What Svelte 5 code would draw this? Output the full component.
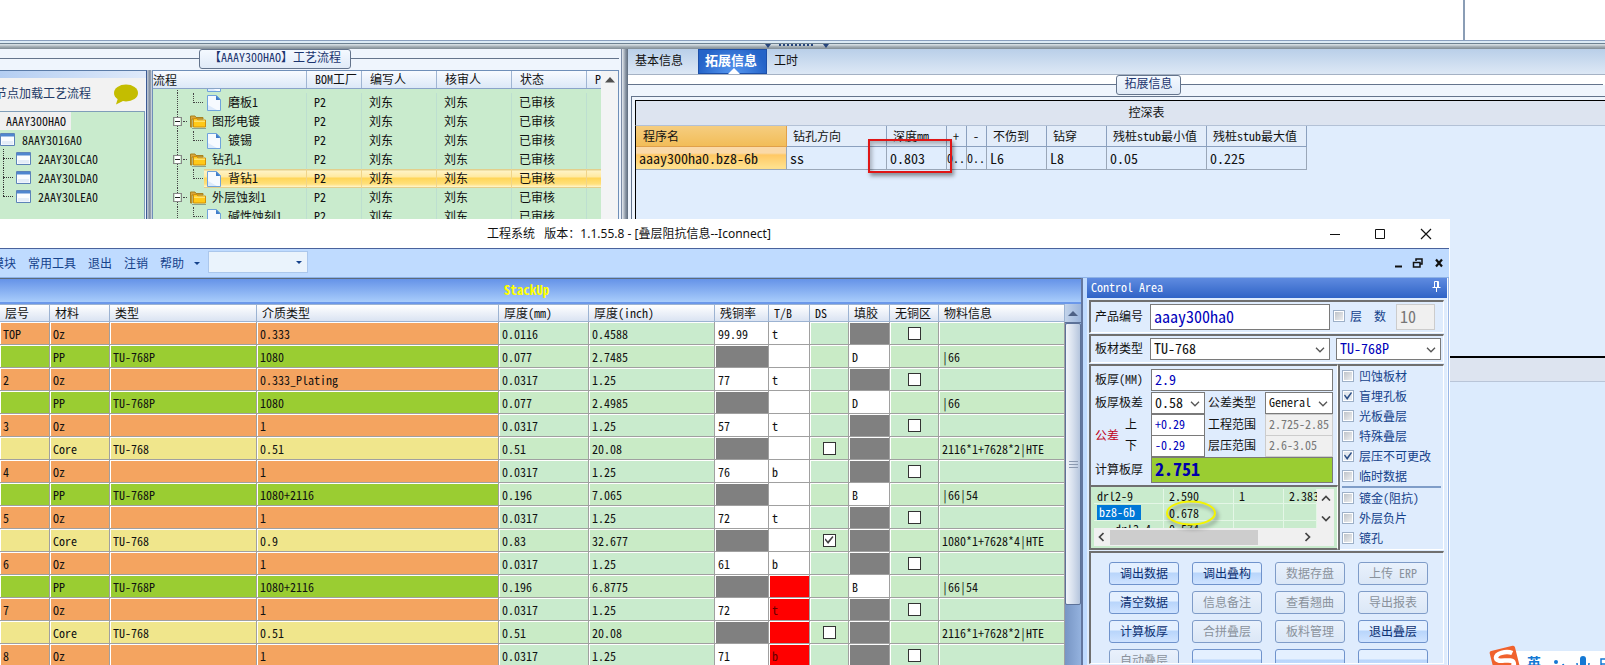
<script>
  const bomTree = ['2AAY30LCA0', '2AAY30LDA0', '2AAY30LEA0'];

  const steps = [
    { kind: 'file', name: '' },
    { kind: 'file', name: '磨板1', last: true },
    { kind: 'folder', name: '图形电镀' },
    { kind: 'file', name: '镀锡', last: true },
    { kind: 'folder', name: '钻孔1' },
    { kind: 'file', name: '背钻1', last: true, active: true },
    { kind: 'folder', name: '外层蚀刻1' },
    { kind: 'file', name: '碱性蚀刻1' }
  ];

  const depthHead = ['程序名', '钻孔方向', '深度mm', '+', '-', '不伤到', '钻穿', '残桩stub最小值', '残桩stub最大值'];
  const depthRow = ['aaay300ha0.bz8-6b', 'ss', '0.803', '0..', '0..', 'L6', 'L8', '0.05', '0.225'];
  const depthCols = [151, 100, 60, 20, 20, 60, 60, 100, 100];

  const stackHead = ['层号', '材料', '类型', '介质类型', '厚度(mm)', '厚度(inch)', '残铜率', 'T/B', 'DS', '填胶', '无铜区', '物料信息'];
  const stackCols = [50, 60, 147, 0, 90, 126, 54, 41, 39, 41, 49, 126];

  const oz = (no, diel, mm, inch, cu, tb, red) => ({ k: 'oz', no, mat: 'Oz', type: '', diel, mm, inch, cu, tb, red });
  const pp = (diel, mm, inch, glue, info, red) => ({ k: 'pp', no: '', mat: 'PP', type: 'TU-768P', diel, mm, inch, glue, info, red });
  const core = (diel, mm, inch, ds, info, red) => ({ k: 'core', no: '', mat: 'Core', type: 'TU-768', diel, mm, inch, ds, info, red });

  const layers = [
    oz('TOP', '0.333', '0.0116', '0.4588', '99.99', 't'),
    pp('1080', '0.077', '2.7485', 'D', '|66'),
    oz('2', '0.333_Plating', '0.0317', '1.25', '77', 't'),
    pp('1080', '0.077', '2.4985', 'D', '|66'),
    oz('3', '1', '0.0317', '1.25', '57', 't'),
    core('0.51', '0.51', '20.08', false, '2116*1+7628*2|HTE'),
    oz('4', '1', '0.0317', '1.25', '76', 'b'),
    pp('1080+2116', '0.196', '7.065', 'B', '|66|54'),
    oz('5', '1', '0.0317', '1.25', '72', 't'),
    core('0.9', '0.83', '32.677', true, '1080*1+7628*4|HTE'),
    oz('6', '1', '0.0317', '1.25', '61', 'b'),
    pp('1080+2116', '0.196', '6.8775', 'B', '|66|54', true),
    oz('7', '1', '0.0317', '1.25', '72', 't', true),
    core('0.51', '0.51', '20.08', false, '2116*1+7628*2|HTE', true),
    oz('8', '1', '0.0317', '1.25', '71', 'b', true)
  ];

  const flags = [
    ['凹蚀板材', false], ['盲埋孔板', true], ['光板叠层', false],
    ['特殊叠层', false], ['层压不可更改', true], ['临时数据', false]
  ];
  const flags2 = [['镀金(阻抗)', false], ['外层负片', false], ['镀孔', false]];

  const actions = [
    ['调出数据', true], ['调出叠构', true], ['数据存盘', false], ['上传 ERP', false],
    ['清空数据', true], ['信息备注', false], ['查看翘曲', false], ['导出报表', false],
    ['计算板厚', true], ['合拼叠层', false], ['板料管理', false], ['退出叠层', true],
    ['自动叠层', false], ['', true], ['', true], ['', true]
  ];
</script>

{#snippet fileIcon()}
  <svg class="ico" width="14" height="16" viewBox="0 0 14 16" aria-hidden="true">
    <path d="M.5 .5H9.5L13.5 4.5V15.5H.5Z" fill="#f6faff" stroke="#6fa3dc" />
    <path d="M1 10L10 15H1Z" fill="#dceafb" />
    <path d="M9 .5L13.5 5H9Z" fill="#3d7cc9" />
  </svg>
{/snippet}

{#snippet folderIcon()}
  <svg class="ico" width="16" height="14" viewBox="0 0 16 14" aria-hidden="true">
    <path d="M.5 1H5L6 2.500H13V4H2V12H.5Z" fill="#d9a63c" stroke="#a8821f" />
    <path d="M3.500 12V3.500H7L8 5H15.500V12Z" fill="#ffc918" stroke="#d28f0a" />
    <path d="M4 5.500H15V7H4Z" fill="#ffe36b" />
    <path d="M2 13.500H16" stroke="#8ba38e" />
  </svg>
{/snippet}

{#snippet formIcon()}
  <svg class="ico" width="15" height="13" viewBox="0 0 15 13" aria-hidden="true">
    <path d="M.5 .5H14.500V12.500H.5Z" fill="#fafcff" stroke="#5d83b8" />
    <path d="M1 1H14V3.500H1Z" fill="#4f86cf" />
    <path d="M2 8H13V11.500H2Z" fill="#e4edf8" />
  </svg>
{/snippet}

{#snippet chevron()}
  <svg class="chev" width="10" height="6" viewBox="0 0 10 6" aria-hidden="true">
    <path d="M1 .8L5 4.800L9 .8" fill="none" stroke="#555" stroke-width="1.300" />
  </svg>
{/snippet}

{#snippet flag(item)}
  <label class="flag"><input type="checkbox" checked={item[1]} />{item[0]}</label>
{/snippet}

<div class="desktop">
  <div class="blank"><span class="divider"></span></div>
  <div class="splitbar">
    <svg width="64" height="5" viewBox="0 0 64 5" aria-hidden="true">
      <path d="M0 0H6L3 4ZM58 0H64L61 4Z" fill="#26457c" />
      <path d="M14 1H49" stroke="#26457c" stroke-width="2" stroke-dasharray="2 2" />
    </svg>
  </div>

  <div class="back">
    <section class="left">
      <div class="legend"><h2>【AAAY300HAO】工艺流程</h2></div>
      <div class="left-cols">
        <aside class="bom">
          <div class="bom-strip"></div>
          <div class="bom-head">
            <span>节点加载工艺流程</span>
            <svg width="26" height="22" viewBox="0 0 26 22" aria-hidden="true">
              <ellipse cx="13" cy="9" rx="12" ry="8.500" fill="#c4bd00" />
              <path d="M5 14L3 20.500L12 16Z" fill="#c4bd00" />
            </svg>
          </div>
          <div class="bom-body">
            <div class="bom-root"><span>AAAY300HAO</span></div>
            <div class="bom-row">{@render formIcon()}<span>8AAY3016A0</span></div>
            {#each bomTree as item}
              <div class="bom-row child">{@render formIcon()}<span>{item}</span></div>
            {/each}
          </div>
        </aside>
        <div class="vsplit thin"></div>
        <div class="flow">
          <div class="flow-row head">
            <span class="c0">流程</span><span>BOM工厂</span><span>编写人</span><span>核审人</span><span>状态</span><span>P</span>
          </div>
          <div class="flow-body">
            {#each steps as s}
              <div class="flow-row" class:active={s.active}>
                <span class="c0 {s.kind}" class:last={s.last}>
                  {#if s.kind === 'folder'}<i class="box"></i>{@render folderIcon()}{:else}<i class="elbow"></i>{@render fileIcon()}{/if}
                  <b>{s.name}</b>
                </span>
                {#if s.name}
                  <span>P2</span><span>刘东</span><span>刘东</span><span>已审核</span><span></span>
                {/if}
              </div>
            {/each}
          </div>
          <div class="flow-scroll">
            <svg width="10" height="6" viewBox="0 0 10 6" aria-hidden="true"><path d="M0 5.500L5 0L10 5.500Z" fill="#505050" /></svg>
          </div>
        </div>
      </div>
    </section>

    <div class="vsplit"></div>

    <section class="right">
      <nav class="tabs">
        <button>基本信息</button><button class="on">拓展信息</button><button>工时</button>
      </nav>
      <div class="legend low"><h2>拓展信息</h2></div>
      <div class="depth">
        <div class="depth-title">控深表</div>
        <div class="depth-body">
          <table>
            <colgroup>{#each depthCols as w}<col style="width:{w}px" />{/each}</colgroup>
            <thead><tr>{#each depthHead as h}<th>{h}</th>{/each}</tr></thead>
            <tbody><tr>{#each depthRow as c}<td class:tight={c === '0..'}>{c}</td>{/each}</tr></tbody>
          </table>
          <div class="next-band"></div>
        </div>
      </div>
    </section>
  </div>

  <div class="mark-box"></div>

  <div class="window">
    <header class="titlebar">
      <h1>工程系统&nbsp;&nbsp; 版本：1.1.55.8 - [叠层阻抗信息--Iconnect]</h1>
      <svg width="103" height="12" viewBox="0 0 103 12" aria-hidden="true">
        <path d="M1 6.500H11" stroke="#111" />
        <path d="M46.500 1.500H55.500V10.500H46.500Z" fill="none" stroke="#111" />
        <path d="M92 1L102 11M102 1L92 11" stroke="#111" stroke-width="1.200" />
      </svg>
    </header>
    <nav class="menubar">
      <button>模块</button><button>常用工具</button><button>退出</button><button>注销</button><button>帮助</button>
      <i class="tri"></i>
      <div class="combo"><i class="tri"></i></div>
      <svg width="50" height="10" viewBox="0 0 50 10" aria-hidden="true">
        <path d="M1 8.500H8" stroke="#111" stroke-width="2" />
        <path d="M22 3V1H28V6H26" fill="none" stroke="#111" stroke-width="1.500" />
        <path d="M19.500 4.500H26V9H19.500Z" fill="none" stroke="#111" stroke-width="1.500" />
        <path d="M42 1.500L48 8.500M48 1.500L42 8.500" stroke="#111" stroke-width="2.200" />
      </svg>
    </nav>

    <div class="work">
      <section class="stack">
        <h2>StackUp</h2>
        <div class="stack-cols">
          <table>
            <colgroup>{#each stackCols as w}<col style={w ? `width:${w}px` : ''} />{/each}</colgroup>
            <thead><tr>{#each stackHead as h}<th>{h}</th>{/each}</tr></thead>
            <tbody>
              {#each layers as l}
                <tr class={l.k}>
                  <td class="m">{l.no}</td><td class="m">{l.mat}</td><td class="m">{l.type}</td><td class="m">{l.diel}</td>
                  <td>{l.mm}</td><td>{l.inch}</td>
                  <td class={l.cu ? 'w' : 'g'}>{l.cu ?? ''}</td>
                  <td class={l.red ? 'r' : 'w'}>{l.tb ?? ''}</td>
                  <td class="ck">{#if l.k === 'core'}<input type="checkbox" aria-label="DS" checked={l.ds} />{/if}</td>
                  <td class={l.glue ? 'w' : 'g'}>{l.glue ?? ''}</td>
                  <td class="ck">{#if l.k === 'oz'}<input type="checkbox" aria-label="无铜区" />{/if}</td>
                  <td>{l.info ?? ''}</td>
                </tr>
              {/each}
            </tbody>
          </table>
          <div class="vscroll">
            <div class="up"><svg width="10" height="5" viewBox="0 0 10 5" aria-hidden="true"><path d="M0 5L5 0L10 5Z" fill="#4d6185" /></svg></div>
            <div class="thumb"><i></i></div>
          </div>
        </div>
      </section>

      <section class="control">
        <h2>
          <span>Control Area</span>
          <svg width="9" height="11" viewBox="0 0 9 11" aria-hidden="true">
            <path d="M2.500 6V.5H6.500V6M.5 6.500H8.500M4.500 7V11M5.500 1V6" fill="none" stroke="#fff" />
          </svg>
        </h2>

        <div class="panel p1">
          <label for="prod">产品编号</label>
          <input id="prod" class="f16 blue" value="aaay300ha0" />
          <label class="flag"><input type="checkbox" />层&nbsp;&nbsp;数</label>
          <input class="f16 off" aria-label="层数" value="10" disabled />
        </div>

        <div class="panel p2">
          <label for="mat">板材类型</label>
          <div class="sel"><select id="mat" class="f14"><option>TU-768</option></select>{@render chevron()}</div>
          <div class="sel"><select class="f14 blue" aria-label="PP类型"><option>TU-768P</option></select>{@render chevron()}</div>
        </div>

        <div class="mid">
          <div class="mid-left">
            <div class="fields">
              <label for="thk">板厚(MM)</label>
              <input id="thk" class="f14 blue wide" value="2.9" />
              <label for="rng">板厚极差</label>
              <div class="sel"><select id="rng" class="f14"><option>0.58</option></select>{@render chevron()}</div>
              <label for="tol">公差类型</label>
              <div class="sel"><select id="tol"><option>General</option></select>{@render chevron()}</div>
              <div class="tolerance"><strong>公差</strong><span><label for="up">上</label><label for="dn">下</label></span></div>
              <input id="up" class="blue" value="+0.29" />
              <label for="eng">工程范围</label>
              <input id="eng" class="off" value="2.725-2.85" disabled />
              <input id="dn" class="blue" value="-0.29" />
              <label for="lam">层压范围</label>
              <input id="lam" class="off" value="2.6-3.05" disabled />
              <label for="calc">计算板厚</label>
              <input id="calc" class="wide calc" value="2.751" />
            </div>
            <div class="drills">
              <div class="drill-view">
                <table>
                  <tbody>
                    <tr><td>drl2-9</td><td>2.590</td><td>1</td><td>2.383</td></tr>
                    <tr><td><mark>bz8-6b</mark></td><td>0.678</td><td></td><td></td></tr>
                    <tr><td>&nbsp; &nbsp;drl3-4</td><td>0.574</td><td></td><td></td></tr>
                  </tbody>
                </table>
              </div>
              <div class="dv">
                <svg width="10" height="6" viewBox="0 0 10 6" aria-hidden="true"><path d="M1 5.500L5 1.500L9 5.500" fill="none" stroke="#444" stroke-width="1.700" /></svg>
                <svg width="10" height="6" viewBox="0 0 10 6" aria-hidden="true"><path d="M1 .5L5 4.500L9 .5" fill="none" stroke="#444" stroke-width="1.700" /></svg>
              </div>
              <div class="dh">
                <svg width="6" height="10" viewBox="0 0 6 10" aria-hidden="true"><path d="M5.500 1L1.500 5L5.500 9" fill="none" stroke="#444" stroke-width="1.700" /></svg>
                <i></i>
                <svg width="6" height="10" viewBox="0 0 6 10" aria-hidden="true"><path d="M.5 1L4.500 5L.5 9" fill="none" stroke="#444" stroke-width="1.700" /></svg>
              </div>
              <svg class="ring" width="56" height="32" viewBox="0 0 56 32" aria-hidden="true">
                <ellipse cx="27" cy="14" rx="24" ry="11.500" fill="none" stroke="#f4f400" stroke-width="2" />
              </svg>
            </div>
          </div>
          <div class="flags">
            {#each flags as f}{@render flag(f)}{/each}
            <hr />
            {#each flags2 as f}{@render flag(f)}{/each}
          </div>
        </div>

        <div class="panel actions">
          {#each actions as a}<button disabled={!a[1]} aria-label={a[0] || '备用'}>{a[0]}</button>{/each}
        </div>
      </section>
    </div>
  </div>

  <div class="ime">
    <svg class="logo" width="32" height="32" viewBox="0 0 32 32" aria-hidden="true">
      <g transform="rotate(-14 16 16)">
        <rect x="3" y="3" width="26" height="26" rx="2" fill="#f0622d" />
        <path d="M25 10C20 6 8 6 8 11.500C8 17 24 14 24 20C24 26 11 25 7 21" fill="none" stroke="#fff" stroke-width="4.500" />
      </g>
    </svg>
    <span>英</span>
    <svg width="66" height="18" viewBox="0 0 66 18" aria-hidden="true">
      <circle cx="3" cy="7" r="2" fill="#1478d4" /><path d="M10 9C11 12 9 14 7 15" stroke="#1478d4" stroke-width="2" fill="none" />
      <rect x="27" y="1" width="6" height="11" rx="3" fill="#1478d4" /><path d="M24 8C24 16 36 16 36 8M30 14V18" stroke="#1478d4" stroke-width="1.500" fill="none" />
      <path d="M48 4H66V16H48ZM54 4V16M60 4V16M48 9H66" stroke="#1478d4" stroke-width="1.500" fill="none" />
    </svg>
  </div>
</div>

<style>
  :global(body) { background: #dfeafb; overflow: hidden; }

  .desktop {
    position: relative;
    display: flex;
    flex-direction: column;
    height: 100vh;
    overflow: hidden;
    background: #fff;
    color: #111;
    font: 12px/16px "Noto Sans CJK SC", sans-serif;
    font-feature-settings: "hwid";
  }
  .desktop *, .desktop *::before, .desktop *::after { box-sizing: border-box; }
  h1, h2 { margin: 0; font-size: 12px; font-weight: 400; }
  button, input, select {
    margin: 0;
    padding: 0;
    border: 0;
    background: none;
    color: inherit;
    font: inherit;
    font-feature-settings: inherit;
    min-width: 0;
  }
  table { border-collapse: separate; border-spacing: 0; table-layout: fixed; }
  th, td { padding: 0; font-weight: 400; text-align: left; white-space: nowrap; overflow: hidden; }
  .ico { flex: none; }

  .blank { height: 40px; display: flex; justify-content: flex-end; flex: none; }
  .divider { width: 2px; margin-right: 140px; background: #8a9db5; }
  .splitbar {
    flex: none;
    height: 9px;
    padding: 4px 0 0 765px;
    background: linear-gradient(#8aa0bf 0 1px, #dcebf6 1px 3px, #6d8191 3px 4px, #d2dbe0 4px 5px, #aeb8be 6px, #7f8b94 9px);
  }
  .splitbar svg { display: block; }

  .back { flex: 1; display: flex; min-height: 0; background: #eff5fd; }
  .left { width: 622px; flex: none; display: flex; flex-direction: column; border-right: 1px solid #7b8ba6; }
  .legend { position: relative; height: 21px; display: flex; flex: none; }
  .left .legend { padding-left: 199px; }
  .legend::before { content: ""; position: absolute; inset: 9px 2px auto 0; border-top: 1px solid #64748c; }
  .legend h2 {
    position: relative;
    height: 20px;
    padding: 0 7px;
    border: 1px solid #64748c;
    border-radius: 3px;
    background: linear-gradient(#f4f9ff, #e0eaf7);
    color: #1c356f;
    line-height: 13px;
  }
  .left .legend h2 { padding: 0 9px; }
  .left-cols { flex: 1; display: flex; min-height: 0; }
  .bom { width: 147px; flex: none; display: flex; flex-direction: column; border-top: 1px solid #5b7ca8; border-right: 1px solid #3c5a93; }
  .bom-strip { height: 7px; background: linear-gradient(90deg, #b4cef2, #dfeafa); flex: none; }
  .bom-head { height: 33px; flex: none; display: flex; align-items: center; gap: 22px; margin-right: 1px; background: #f2f2f2; white-space: nowrap; color: #233a66; }
  .bom-head span { margin-left: -5px; padding-bottom: 4px; }
  .bom-head svg { flex: none; }
  .bom-body { flex: 1; margin-right: 1px; border: 1px solid #7f9db9; border-left: 0; background: #c9ebcd; }
  .bom-root { height: 18px; }
  .bom-root span { display: inline-block; height: 18px; padding: 0 5px 0 6px; background: #f0f0f0; line-height: 17px; }
  .bom-row { height: 19px; display: flex; align-items: center; gap: 7px; }
  .bom-row.child { position: relative; padding-left: 16px; }
  .child::before { content: ""; position: absolute; left: 3px; top: 0; height: 100%; width: 10px; border-left: 1px dotted #333; }
  .child:last-child::before { height: 9px; }
  .child::after { content: ""; position: absolute; left: 3px; top: 9px; width: 10px; border-top: 1px dotted #333; }

  .vsplit { width: 6px; flex: none; background: linear-gradient(90deg, #e6ebf1, #8894a3 60%, #5d6b7d); }
  .vsplit.thin { width: 5px; background: linear-gradient(90deg, #c3cdda, #7b8899 60%, #dfe6ef); }

  .flow { position: relative; flex: 1; display: flex; flex-direction: column; min-width: 0; margin-right: 2px; border: 1px solid #6f8fb8; border-width: 1px 1px 0; }
  .flow-row { display: grid; grid-template-columns: 154px 55px 75px 75px 75px 1fr; height: 19px; flex: none; line-height: 17px; }
  .flow-row > span { padding-left: 7px; border-right: 1px solid #bddfd0; white-space: nowrap; overflow: hidden; }
  .flow-row > span:last-child { border-right: 0; }
  .flow-row > .c0 { padding-left: 0; position: relative; display: flex; align-items: center; }
  .flow-row.head { height: 18px; background: linear-gradient(#f8fbff, #dce8f7); border-bottom: 1px solid #8aa4c8; line-height: 15px; }
  .flow-row.head > span { padding-left: 8px; border-color: #9fb5d3; }
  .flow-row.head > .c0 { padding-left: 0; }
  .flow-body { flex: 1; min-height: 0; overflow: hidden; margin-right: 16px; background: #c9ebcd; }
  .flow-body .flow-row:first-child { margin-top: -15px; }
  .c0 b { font-weight: 400; padding-bottom: 2px; }
  .c0.folder { gap: 6px; }
  .c0.file { gap: 7px; }
  .flow-row > .c0.folder { padding-left: 20px; }
  .flow-row > .c0.file { padding-left: 54px; }
  .c0.folder::before, .c0.file::before { content: ""; position: absolute; left: 24px; top: 0; bottom: 0; border-left: 1px dotted #444; }
  .elbow { position: absolute; left: 40px; top: 0; width: 10px; height: 10px; border-left: 1px dotted #444; border-bottom: 1px dotted #444; }
  .box { position: relative; width: 9px; height: 9px; margin-right: 2px; border: 1px solid #888; background: linear-gradient(#fff 0 3px, #222 3px 4px, #fff 4px) content-box #fff; padding: 0 1px; }
  .box::after { content: ""; position: absolute; left: 9px; top: 3px; width: 4px; border-top: 1px dotted #444; }
  .active { background: linear-gradient(90deg, #c9ebcd 51px, transparent 51px), linear-gradient(#e3cf8c 0 1px, #fff3c4 2px, #ffe9a0 8px, #ffd557 9px, #ffe07c 15px, #fff6d0 18px, #e3cf8c 18px); }
  .active > span { border-color: #f0d48a; }
  .flow-scroll { position: absolute; right: 0; top: 0; bottom: 0; width: 17px; padding: 6px 0 0 4px; background: #f3f4f5; }
  .flow-scroll svg { display: block; }

  .right { flex: 1; min-width: 0; display: flex; flex-direction: column; background: #eff5fd; }
  .tabs { height: 26px; flex: none; display: flex; background: linear-gradient(#b9cfe9, #dde8f5); border-bottom: 1px solid #a5b2c4; }
  .tabs button { padding: 0 8px 3px 7px; }
  .tabs button:first-child { padding-right: 15px; }
  .tabs button.on { position: relative; padding: 0 9px 3px 6px; border: 1px solid #1c4fa8; background: radial-gradient(circle at 50% 120%, #5b9cf4, #2463c8 80%); color: #fff; font-size: 13px; font-weight: 700; }
  .tabs button.on::after { content: ""; position: absolute; left: 29px; bottom: -1px; border: 6px solid transparent; border-top: 0; border-bottom-color: #fff; }
  .right .legend { padding-left: 64px; background: linear-gradient(#fff 10px, #eff5fd 10px); justify-content: center; }
  .depth { flex: 1; display: flex; flex-direction: column; min-height: 0; margin-left: 3px; padding: 3px 0 0 3px; border: 1px solid #64748c; border-width: 1px 0 0 1px; }
  .depth-title { height: 25px; flex: none; border: 1px solid #000; border-width: 1px 0 0 1px; background: #dde4f0; text-align: center; line-height: 22px; padding-left: 52px; }
  .depth-body { flex: 1; display: flex; flex-direction: column; align-items: flex-start; min-height: 0; border-left: 1px solid #000; background: #e0edfd; border-top: 1px solid #b3c1d6; }
  .depth table { width: 671px; flex: none; }
  .depth th { height: 21px; padding-left: 6px; border: 1px solid #8ba0be; border-width: 0 1px 1px 0; background: #e3edfa; line-height: 18px; }
  .depth td { height: 23px; padding-left: 3px; border-right: 1px solid #9aa7b8; border-bottom: 1px solid #9aa7b8; font-size: 14px; line-height: 22px; }
  .depth td.tight { padding: 0; overflow: visible; font-size: 12px; }
  .depth th:first-child { padding-left: 7px; background: linear-gradient(#f5cd80, #f2bd58); border-color: #e0a04a; }
  .depth td:first-child { background: linear-gradient(#fad9a8 0 6px, #ffc864 8px, #ffe08c 20px); }
  .next-band { flex: 1; width: 100%; background: linear-gradient(#e0edfd 0 186px, #000 186px 188px, #dde4f0 188px 211px, #b9c5d8 211px 212px, #dcebfd 212px); }

  .mark-box { position: absolute; left: 868px; top: 139px; width: 84px; height: 34px; border: 2px solid #e01616; box-shadow: 2px 3px 4px #0006, inset 2px 3px 4px #0004; }

  .window { position: absolute; left: 0; right: 155px; top: 219px; bottom: 0; display: flex; flex-direction: column; background: #bfdbff; border-right: 1px solid #fff; overflow: hidden; }
  .titlebar { height: 30px; flex: none; display: flex; align-items: center; justify-content: space-between; padding: 0 17px 0 487px; background: #fff; border-bottom: 1px solid #4a629c; }
  .titlebar h1 { font-feature-settings: normal; font-family: "Noto Sans", "Noto Sans CJK SC", sans-serif; white-space: nowrap; }
  .menubar { height: 29px; flex: none; display: flex; align-items: center; gap: 12px; padding: 0 5px 0 0; border-bottom: 1px solid #8eb2e6; color: #15428b; }
  .menubar button:first-child { margin-left: -8px; }
  .tri { width: 0; border: 3px solid transparent; border-top-color: #15428b; border-bottom: 0; margin: 0 -4px 0 -2px; }
  .combo { width: 100px; height: 22px; display: flex; align-items: center; justify-content: flex-end; margin: -2px auto 0 0; padding-right: 9px; border: 1px solid #abc7ec; background: #eaf3fc; }

  .work { flex: 1; min-height: 0; display: flex; gap: 4px; padding-right: 1px; }
  .stack { flex: 1; min-width: 0; display: flex; flex-direction: column; border-right: 2px solid #63779f; }
  .stack h2 { height: 26px; flex: none; border-top: 1px solid #5c6b7c; border-bottom: 2px solid #6b98ea; background: linear-gradient(#6593e8, #a8ccfb); color: #ff0; font-size: 13px; font-weight: 700; line-height: 22px; text-align: center; padding-right: 28px; }
  .stack-cols { flex: 1; min-height: 0; display: flex; }
  .stack table { flex: 1; min-width: 0; width: 0; height: max-content; background: #c9ebcd; }
  .stack th { height: 18px; padding-left: 5px; border: 1px solid #9cb3d2; border-left: 0; background: linear-gradient(#fff, #dae3f2); line-height: 16px; }
  .stack td { height: 23px; padding-left: 3px; border-right: 1px solid #a0a0a0; border-bottom: 1px solid #a0a0a0; box-shadow: inset 1px 1px #fff; line-height: 21px; white-space: pre; }
  .oz .m { background: #f4a460; }
  .pp .m { background: #9acd32; }
  .core .m { background: #f0e68c; }
  .pp td, .core td { background: #c9ebc6; }
  .stack td.w { background: #fff; }
  .stack td.g { background: #808080; }
  .stack td.r { background: #f00; color: #600; }
  .stack td.ck { padding: 0; text-align: center; }
  .ck input { appearance: none; display: block; width: 13px; height: 13px; margin: 0 auto; border: 1px solid #333; background: #fff; }
  .ck input:checked::before, .flag input:checked::before {
    content: "";
    display: block;
    width: 9px;
    height: 8px;
    margin: 1px;
    background: #444;
    clip-path: polygon(0 45%, 12% 30%, 38% 65%, 88% 0, 100% 12%, 40% 100%);
  }
  .core .ck input { margin-top: 1px; }
  .vscroll { width: 16px; flex: none; display: flex; flex-direction: column; background: linear-gradient(90deg, #7795c4, #94b2de); }
  .up { height: 19px; flex: none; display: grid; place-items: center; background: linear-gradient(90deg, #c2d3ea, #9bb5dc); border-bottom: 1px solid #5d7299; }
  .thumb { height: 282px; display: grid; place-items: center; border: 1px solid #5d7299; border-radius: 2px; background: linear-gradient(90deg, #f2f5fa, #d6dfed 50%, #b5c5dd); }
  .thumb i { width: 9px; height: 7px; background: repeating-linear-gradient(#8b99b0 0 1px, transparent 1px 3px); }

  .control { width: 361px; flex: none; display: flex; flex-direction: column; border-right: 1px solid #f5faff; box-shadow: 1px 0 #9ab7e6; background: #dfecfd; }
  .control h2 { height: 20px; flex: none; display: flex; justify-content: space-between; align-items: center; margin-bottom: 2px; padding: 0 6px 3px 4px; background: linear-gradient(#5f8be0, #2f63c6); color: #fff; }
  .panel, .fields, .drills, .flags { border: 1px solid #fff; border-top: 2px solid #6f6f6f; border-left: 2px solid #6f6f6f; }
  .panel { margin: 0 3px 1px 2px; flex: none; }
  .control input:not([type]), .sel { border: 1px solid #7a7a7a; background: #fff; width: 100%; height: 22px; padding: 0 0 2px 3px; }
  .control .blue { color: #00b; }
  .control .f16 { font-size: 16px; }
  .control .f14 { font-size: 14px; }
  .control input.off { border-color: #ccc; background: #f0f0f0; color: #777; -webkit-text-fill-color: #777; }
  .sel { position: relative; }
  .sel select { appearance: none; display: block; width: 100%; height: 18px; }
  .chev { position: absolute; right: 4px; top: 8px; }

  .p1 { height: 33px; display: grid; grid-template-columns: 52px 180px 60px 39px; align-items: center; gap: 3px; padding: 0 5px 0 4px; }
  .control .p1 input:not([type]) { height: 26px; }
  .p2 { height: 29px; display: grid; grid-template-columns: 49px 180px 1fr; align-items: center; gap: 6px; padding: 0 2px 0 4px; }
  .p1 label, .p2 label, .fields label { padding-bottom: 2px; }
  .flag { display: flex; align-items: center; gap: 5px; height: 20px; color: #15428b; white-space: nowrap; }
  .flag input { appearance: none; width: 12px; height: 12px; flex: none; border: 1px solid #9db0c8; box-shadow: inset 0 0 0 1px #fff; background: linear-gradient(135deg, #b9bfc6, #f3f3f3); }
  .flag input:checked { background: #e3e8ee; }
  .flag input:checked::before { width: 8px; background: #2c4f86; }

  .mid { display: flex; flex: none; margin: 0 3px 1px 2px; }
  .mid-left { flex: 1; min-width: 0; border-right: 2px solid #6f6f6f; }
  .fields { display: grid; grid-template-columns: 53px 54px 54px 68px; grid-template-rows: 24px 22px 21px 21px 28px; gap: 0 4px; align-items: center; padding: 2px 0 1px 4px; border-bottom: 0; column-gap: 3px; }
  .fields label { white-space: nowrap; }
  .fields .wide { grid-column: 2 / 5; }
  .control .fields input.calc { height: 26px; padding-bottom: 4px; background: #9acd32; color: #00a; font-size: 18px; font-weight: 700; }
  .tolerance { grid-row: 3 / 5; display: flex; align-items: center; gap: 6px; }
  .tolerance strong { color: #c00020; font-weight: 400; }
  .tolerance span { display: grid; gap: 3px; }
  .drills { position: relative; height: 65px; display: grid; grid-template: 1fr 18px / 1fr 17px; padding: 2px 3px 2px 3px; background: #c9ebcd; border: 2px solid #6f6f6f; border-right: 1px solid #fff; }
  .drill-view { overflow: hidden; }
  .drill-view table { width: 100%; margin-top: -1px; }
  .drill-view td { height: 16px; padding-left: 5px; border: 1px solid #e4f6e6; border-width: 0 1px 1px 0; line-height: 15px; overflow: visible; }
  .drill-view td:nth-child(1), .drill-view td:nth-child(2) { width: 70px; }
  .drill-view td:nth-child(3) { width: 50px; }
  .drill-view td:first-child { padding-left: 3px; }
  mark { display: inline-block; height: 15px; padding: 0 6px 0 2px; background: #0078d7; color: #fff; line-height: 14px; }
  .dv { display: flex; flex-direction: column; align-items: center; justify-content: space-between; padding: 6px 0; background: #f0f0f0; }
  .dh { grid-column: 1 / 3; display: flex; align-items: center; gap: 6px; padding: 0 23px 0 4px; background: #f0f0f0; }
  .dh i { height: 15px; width: 148px; margin-right: auto; background: #cdcdcd; }
  .ring { position: absolute; left: 73px; top: 12px; filter: drop-shadow(2px 3px 2px #0007); }
  .flags { width: 104px; flex: none; padding-left: 2px; border-left: 0; }
  .flags hr { height: 2px; margin: 0 2px 0 0; border: 0; background: #7f9dc8; }
  .actions { flex: 1; display: grid; grid-template-columns: repeat(4, 70px); grid-auto-rows: 23px; justify-content: space-between; gap: 6px 0; align-content: start; padding: 9px 15px 0 18px; overflow: hidden; min-height: 0; }
  .actions button { border: 1px solid #6f93cc; border-radius: 3px; background: linear-gradient(#e4f0ff 0 9px, #b8d5fb 10px, #cfe3ff); color: #0c2f70; line-height: 18px; padding-bottom: 1px; }
  .actions button:disabled { border-color: #7f9cc8; background: linear-gradient(#e9f1fc, #dbe7f6); color: #8a929c; }

  .ime { position: absolute; right: 0; bottom: 0; width: 115px; height: 14px; display: flex; align-items: flex-start; background: linear-gradient(90deg, transparent 20px, #fff 20px); color: #1478d4; font-size: 14px; font-weight: 700; white-space: nowrap; }
  .ime .logo { flex: none; margin: -6px 6px 0 -1px; }
  .ime span { margin: 3px 12px 0 0; }
  .ime svg:last-child { flex: none; margin-top: 4px; }
</style>
